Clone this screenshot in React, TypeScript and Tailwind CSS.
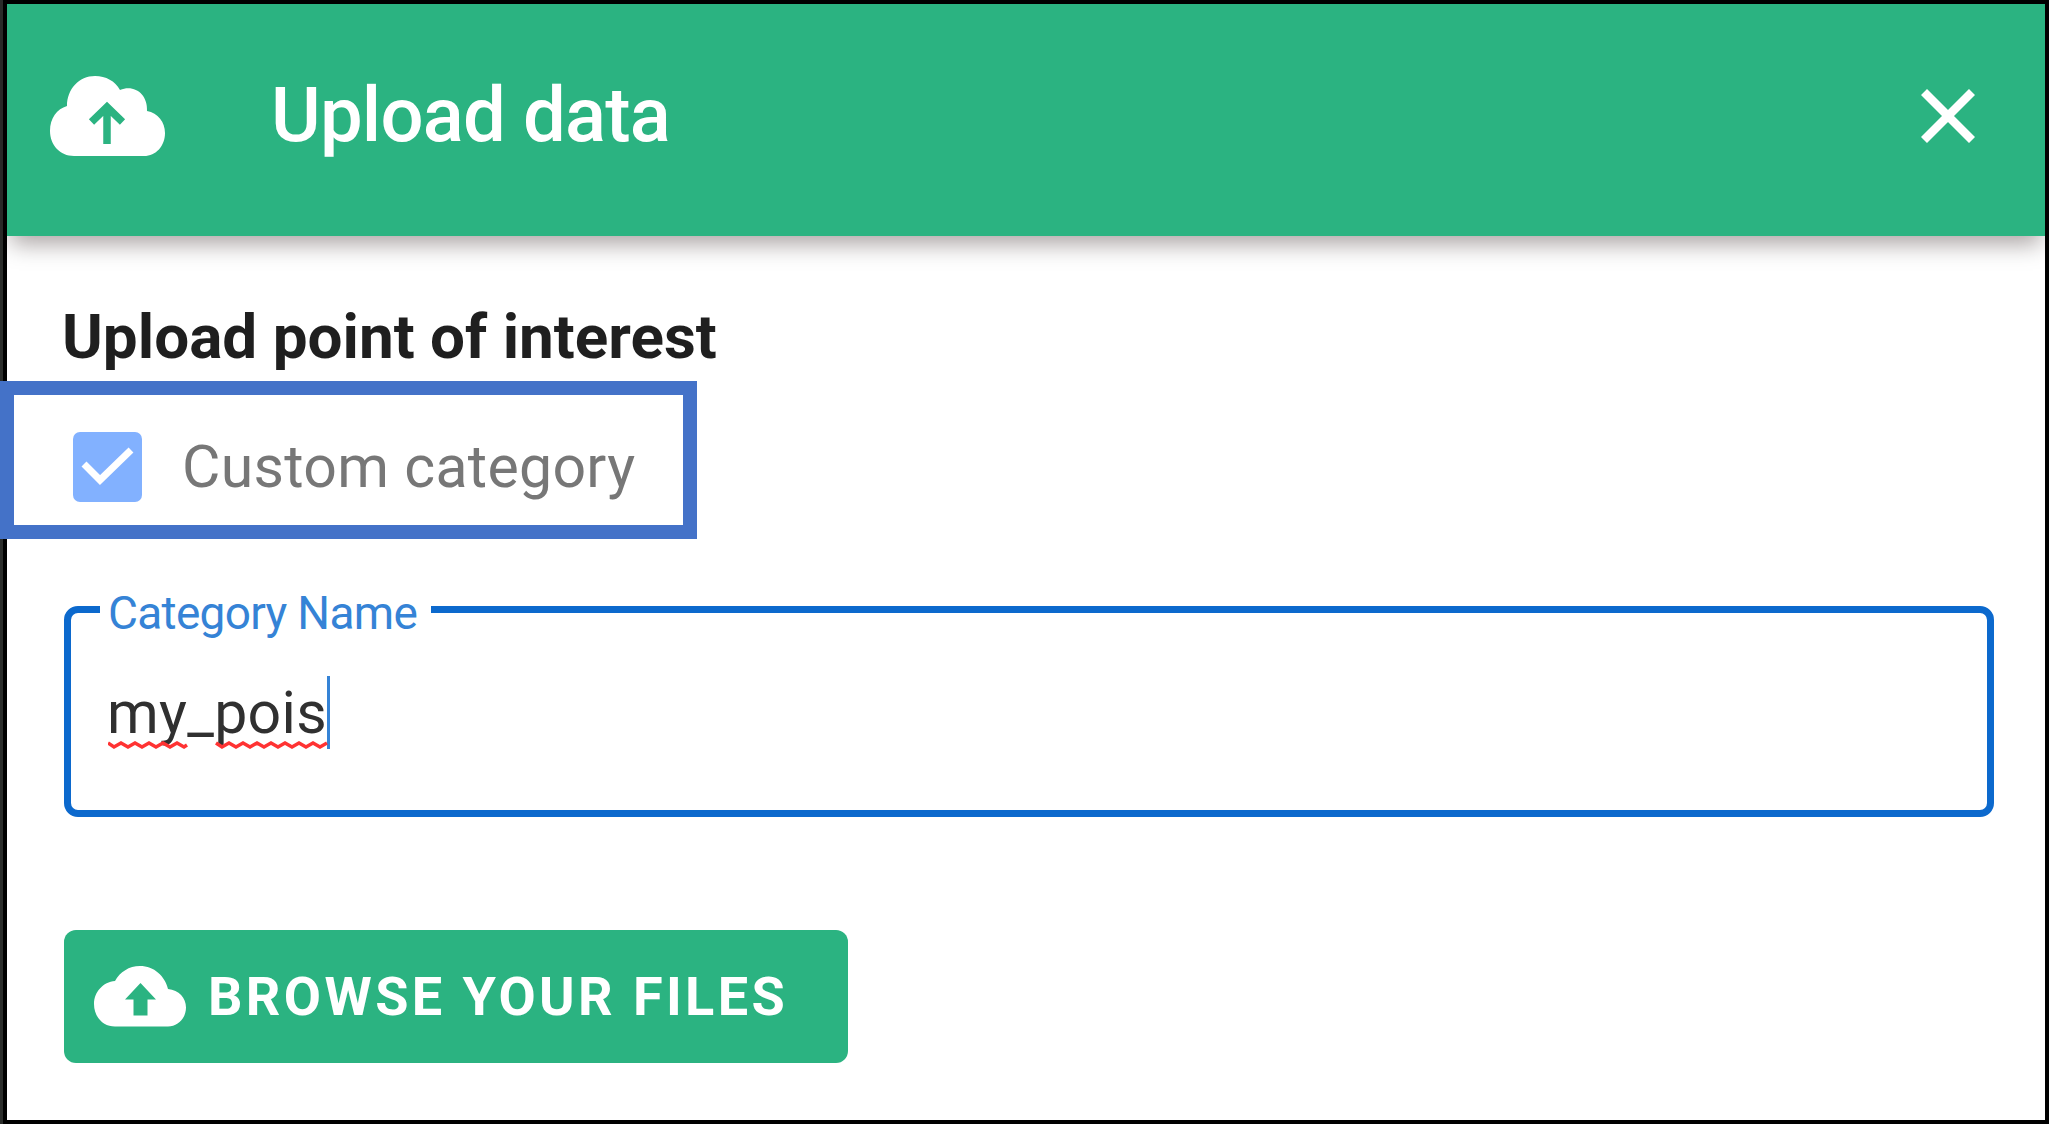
import React from "react";

function HeaderCloud() {
  return (
    <svg className="h-[80px] w-[115px] shrink-0" viewBox="50 75 115 80">
      <path fill="#fff" d="M74 155C60 155 50 144 50 130C50 117 57 108 67 105C67 88 79 75 95 75C106 75 115 80 120 89C134 83 148 93 147 110C158 112 165 121 165 132C165 145 156 155 144 155Z" />
      <path fill="none" stroke="#2bb381" strokeWidth="7.5" d="M107 143V107M91.500 121L107 106L122.500 121" />
    </svg>
  );
}

function ButtonCloud() {
  return (
    <svg className="h-[61px] w-[92px] shrink-0" viewBox="94 966 92 61">
      <path fill="#fff" d="M115 1026.500C103 1026.500 94 1017 94 1004C94 992 103 982 115 981C120 972 129 966 140 966C154 966 165 976 168 989C179 990 186 998 186 1007.500C186 1018 178 1026.500 168 1026.500Z" />
      <path fill="#2bb381" d="M140.500 983L156 999.500H147.500V1015.500H133.500V999.500H125Z" />
    </svg>
  );
}

export default function App() {
  return (
    <div className="h-[1124px] w-[2049px] border-l-[3px] border-[#2b2d2b]">
      <div className="flex h-full flex-col border-4 border-black bg-white font-['Roboto',sans-serif]">
        <header className="flex h-[232px] shrink-0 items-center bg-[#2bb381] pr-[70px] pb-[9px] pl-[43px] shadow-[0_12px_22px_-4px_rgba(20,0,0,0.36)]">
          <HeaderCloud />
          <h1 className="-mt-0.5 ml-[106px] flex-1 text-[76px] leading-none font-medium tracking-[-0.8px] whitespace-nowrap text-white">Upload data</h1>
          <svg className="h-[54px] w-[54px]" viewBox="0 0 54 54">
            <path stroke="#fff" strokeWidth="8.500" d="M3 3L51 51M51 3L3 51" />
          </svg>
        </header>
        <main className="flex flex-1 flex-col items-start pl-[57px]">
          <h2 className="mt-[66px] -ml-0.5 h-[79px] text-[62px] leading-[70px] font-bold whitespace-nowrap text-[#1f1f1f]">Upload point of interest</h2>
          <label className="-ml-16 flex h-[158px] w-[697px] items-center border-[14px] border-[#4472c8] bg-white pt-[14px] pl-[59px]">
            <svg className="h-[70px] w-[69px] shrink-0" viewBox="0 0 69 70">
              <rect width="69" height="70" rx="7" fill="#82b1ff" />
              <path fill="none" stroke="#fff" strokeWidth="7" d="M11 32L27 48L58 18" />
            </svg>
            <span className="-mt-0.5 ml-[40px] text-[59px] leading-none tracking-[0.3px] whitespace-nowrap text-[#777]">Custom category</span>
          </label>
          <fieldset className="mt-[45px] h-[233px] w-[1930px] rounded-[14px] border-[7px] border-[#0c69cd] pl-[29px]">
            <legend className="h-[50px] w-[331px] pt-[4px] pl-[8px] text-[46px] leading-[50px] tracking-[-0.7px] whitespace-nowrap text-[#3583d6]">Category Name</legend>
            <div className="mt-[42px] flex h-[73px] items-start pl-[7px]">
              <span className="relative text-[59px] leading-[73px] tracking-[0.3px] text-[#303030]">
                my_pois
                <svg className="absolute top-[65px] left-px h-[9px] w-[220px]" viewBox="0 0 220 9">
                  <path fill="none" stroke="#f33" strokeWidth="3.500" d="M0 2l6 4l7-4l7 4l7-4l7 4l7-4l7 4l7-4l7 4l7-4l7 4l3-2M108 2l6 4l7-4l7 4l7-4l7 4l7-4l7 4l7-4l7 4l7-4l7 4l7-4l7 4l7-4l7 4l7-4" />
                </svg>
              </span>
              <span className="h-[73px] w-[3px] bg-[#3583d6]" />
            </div>
          </fieldset>
          <button className="mt-[113px] flex h-[133px] w-[784px] items-center rounded-[12px] bg-[#2bb381] pl-[30px]">
            <ButtonCloud />
            <span className="ml-[22px] text-[54px] leading-none font-bold tracking-[3.4px] whitespace-nowrap text-white">BROWSE YOUR FILES</span>
          </button>
        </main>
      </div>
    </div>
  );
}
